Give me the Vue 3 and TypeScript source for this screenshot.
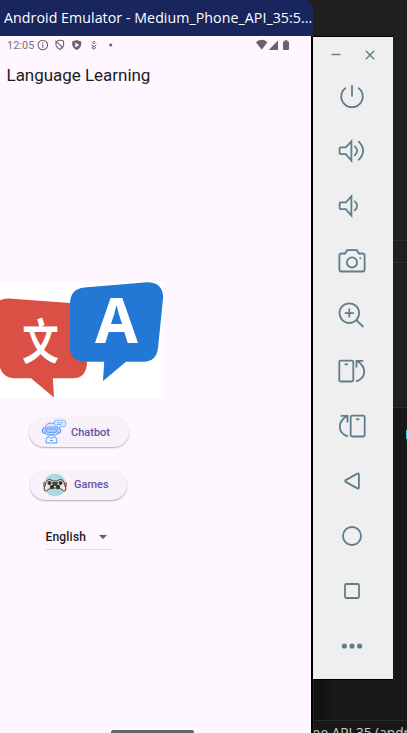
<script setup lang="ts">
interface Tool { name: string; paths: string[]; dots?: number[][]; flip?: boolean }

const speaker = 'M4.7 12.4H9.8L15.4 6.4V25.6L9.8 19.2H4.7Q3.6 19.2 3.6 18.1V13.5Q3.6 12.4 4.7 12.4Z'
const rotate = [
  'M4.8 5.6H15.8Q17.3 5.6 17.3 7.1V25Q17.3 26.5 15.8 26.5H4.8Q3.3 26.5 3.3 25V7.1Q3.3 5.6 4.8 5.6Z',
  'M8.6 9.3H12',
  'M20 26.4C30.5 23 31 12 21 6M27.3 5.8H20.5V12.5',
]
const tools: Tool[] = [
  { name: 'Power', paths: ['M16 5V16.5', 'M9.8 7.8A10.7 10.7 0 1 0 22.2 7.8'] },
  { name: 'Volume up', paths: [speaker, 'M18.3 10.9Q24 15.8 18.3 20.7', 'M22.3 6.2Q32 15.8 22.3 25.4'] },
  { name: 'Volume down', paths: [speaker, 'M18.3 10.9Q24 15.8 18.3 20.7'] },
  { name: 'Screenshot', paths: ['M5.7 8.5H9.2L11 5.2H21L22.8 8.5H26.3Q28.6 8.5 28.6 10.8V24.2Q28.6 26.5 26.3 26.5H5.7Q3.4 26.5 3.4 24.2V10.8Q3.4 8.5 5.7 8.5Z', 'M21.1 17.4A5.1 5.1 0 1 1 10.9 17.4A5.1 5.1 0 1 1 21.1 17.4'], dots: [[24.3, 13.2, 1]] },
  { name: 'Zoom', paths: ['M23.1 13.1A9.8 9.8 0 1 1 3.5 13.1A9.8 9.8 0 1 1 23.1 13.1', 'M20.4 20.2L27.4 27', 'M8.8 13.1H17.8M13.3 8.6V17.6'] },
  { name: 'Rotate left', paths: rotate },
  { name: 'Rotate right', paths: rotate, flip: true },
  { name: 'Back', paths: ['M9.8 15.1L21.4 8.6Q22.9 7.9 22.9 9.5V22.5Q22.9 24.1 21.4 23.4L9.8 16.9Q8.5 16 9.8 15.1Z'] },
  { name: 'Home', paths: ['M25 16A9 9 0 1 1 7 16A9 9 0 1 1 25 16'] },
  { name: 'Overview', paths: ['M10.2 9H21.8Q23 9 23 10.2V21.8Q23 23 21.8 23H10.2Q9 23 9 21.8V10.2Q9 9 10.2 9Z'] },
  { name: 'More', paths: [], dots: [[8.4, 16, 2.6], [16, 16, 2.6], [23.6, 16, 2.6]] },
]
</script>

<template>
  <div class="desktop">
    <section class="emulator">
      <header class="titlebar">Android Emulator - Medium_Phone_API_35:5...</header>
      <main class="phone">
        <div class="status">
          <span class="clock">12:05</span>
          <svg class="notes" width="80" height="14" viewBox="0 0 80 14" fill="none" stroke="#68646b" stroke-width="1.1">
            <circle cx="5.8" cy="7" r="4.8" /><path d="M5.8 6.3V9.7M5.8 4.1V5.2" />
            <path d="M22.7 2.3Q25 2 26.6 3.3V7.4Q25.9 10 22.9 11.6Q19.8 10 19 7.4V3.2L26 10M20 3L22.7 2.3" />
            <path d="M39.7 1.9L44.2 3.5V6.8Q43.7 10.2 39.7 12Q35.7 10.2 35.2 6.8V3.5Z" fill="#68646b" stroke="none" />
            <path d="M38.2 4.6L42.2 7L38.2 9.4Z" fill="#fef7ff" stroke="none" />
            <path d="M56.8 3L58.3 4.5L56.8 6L55.3 4.5ZM54.2 6.5L56.8 9L59.4 6.5M56.8 8L58.8 9.7L56.8 11.2L54.8 9.7Z" stroke-width="1" />
            <circle cx="73.7" cy="7" r="1.6" fill="#68646b" stroke="none" />
          </svg>
          <svg class="signals" width="36" height="14" viewBox="0 0 36 14" fill="#68646b">
            <path d="M0 4.2Q5.7 -.5 11.4 4.2L5.7 11.7Z" /><path d="M12.7 12L22 2.6V12Z" />
            <path d="M27 3.5H28.6V2.2H31.4V3.5H33V11.2Q33 12 32.2 12H27.8Q27 12 27 11.2Z" />
          </svg>
        </div>
        <h1>Language Learning</h1>
        <svg class="logo" width="164" height="116" viewBox="0 0 164 116">
          <path d="M0 0H163.3V116H0Z" fill="#fff" />
          <path d="M0 18.3Q4 16.2 9 16.6L80 21.8L87 82Q85.5 96.3 73 96.3H52.8L54 115.5L31 96.3H13Q3.5 95.5 0 86Z" fill="#da5044" />
          <path d="M70 21Q70.5 6.5 84.5 5.4L147 .3Q162.5 .2 163.2 15L158 66Q156.5 79.5 143.5 79.8H126L103 99L104.2 79.8H84Q70.5 78.5 70 66Z" fill="#2278d4" />
          <text class="han" transform="translate(22.3 76.5) scale(.96 1.25)">文</text>
          <text class="latin" x="95" y="61" textLength="43" lengthAdjust="spacingAndGlyphs">A</text>
        </svg>
        <button class="pill chatbot">
          <svg width="26" height="26" viewBox="0 0 26 26" fill="none" stroke="#5b9bf8" stroke-width="1">
            <path d="M4 9Q5 4 10.5 4Q16 4 17 9" fill="#dfecff" />
            <rect x="4" y="8" width="13" height="8" rx="3.5" fill="#dcebff" />
            <rect x="5.5" y="9.8" width="10" height="3.8" rx="1.7" fill="#a9ccff" />
            <path d="M3.5 8.7Q1.2 10 1.4 12Q1.6 14 3.8 14.6M17.5 8.7Q19.7 10 19.5 12Q19.2 14 17.2 14.6" stroke-width="1.5" />
            <path d="M5.2 24V20.5Q5.5 17.8 8 17.6L10.5 19.5L13 17.6Q15.5 17.8 15.8 20.5V24Z" fill="#eef5ff" />
            <path d="M8 15Q10.5 17 13 15M9 21.5H12" />
            <path d="M15 1.2H22.5Q24.5 1.2 24.5 3V5.8Q24.5 7.6 22.7 7.6H19L16.3 9.5V7.5Q13.3 7 13.3 5V3Q13.3 1.2 15 1.2Z" fill="#e0edff" stroke="#83b4fa" />
            <path d="M16 3.7H22M15.5 5.5H20.5" stroke-width=".7" />
          </svg>
          Chatbot
        </button>
        <button class="pill games">
          <svg width="26" height="26" viewBox="0 0 26 26">
            <path d="M1 2H25V24H1Z" fill="#f8f4ef" /><circle cx="13" cy="13" r="11.3" fill="#a9d9e3" />
            <path d="M2 10V15M24 10V15" stroke="#dc5557" stroke-width="1.6" />
            <path d="M4 10.5Q5 7 8 7.5L11 9H15L18 7.5Q21 7 22 10.5L24 17Q23.5 20 21.5 18.8L17.5 16H8.5L4.5 18.8Q2.5 20 2 17Z" fill="#eae7df" stroke="#484443" stroke-width="1" />
            <path d="M10 10H16L15 14H11Z" fill="#454442" />
            <circle cx="7.5" cy="11" r="2" fill="#353638" /><circle cx="18.5" cy="11" r="2" fill="#353638" />
            <circle cx="10" cy="15" r="2.2" fill="#353638" /><circle cx="16" cy="15" r="2.2" fill="#353638" />
          </svg>
          Games
        </button>
        <div class="language">
          <span>English</span>
          <svg width="8" height="4" viewBox="0 0 8 4"><path d="M0 0H8L4 4Z" fill="#625e65" /></svg>
        </div>
        <div class="handle"></div>
      </main>
    </section>
    <aside class="editor">
      <div class="pane tabs"></div>
      <div class="pane crumbs"></div>
      <div class="pane code"></div>
      <div class="pane terminal"><i></i></div>
      <div class="pane footer"><span>ne API 35 (andr</span></div>
    </aside>
    <nav class="toolbar">
      <div class="controls">
        <svg width="10" height="10" viewBox="0 0 10 10"><path d="M.5 4.5H9.5" /></svg>
        <svg width="10" height="10" viewBox="0 0 10 10"><path d="M.8 .8L9.2 9.2M9.2 .8L.8 9.2" /></svg>
      </div>
      <div v-for="tool in tools" :key="tool.name" class="tool">
        <svg :class="{ flip: tool.flip }" width="32" height="32" viewBox="0 0 32 32">
          <path v-for="d in tool.paths" :key="d" :d="d" />
          <circle v-for="dot in tool.dots" :key="dot[0]" :cx="dot[0]" :cy="dot[1]" :r="dot[2]" />
        </svg>
      </div>
    </nav>
  </div>
</template>

<style>
body { margin: 0; overflow: hidden; }
</style>
<style scoped>
* { box-sizing: border-box; }
.desktop { position: relative; display: flex; width: 407px; height: 733px; overflow: hidden; background: #1f1f1f; font-family: Roboto, sans-serif; }
svg { display: block; flex: none; }
.emulator { display: flex; flex-direction: column; width: 313px; flex: none; background: #1f1f1f; }
.titlebar { height: 36px; padding-left: 4px; border-top-right-radius: 9px; background: #18265d; color: #fff; font: 14.2px/35px "Open Sans", sans-serif; letter-spacing: .06px; white-space: nowrap; }
.phone { display: flex; flex-direction: column; align-items: flex-start; height: 697px; background: #fef7ff; border-right: 2px solid #000; color: #1d1b20; }
.status { display: flex; align-items: center; width: 100%; height: 18px; padding-left: 7px; }
.clock { width: 30px; color: #77737a; font-size: 11px; letter-spacing: 0; }
.signals { margin-left: 139px; }
h1 { margin: 11px 0 0 6.5px; font-size: 17px; line-height: 21px; font-weight: 400; letter-spacing: -.03px; white-space: nowrap; }
.logo { margin-top: 196px; }
.han { font: 700 38px "Noto Sans CJK SC", sans-serif; fill: #fff; }
.latin { font: 700 62px "Noto Sans", sans-serif; fill: #fff; }
.pill { display: flex; align-items: center; height: 30px; padding: 0; border: 0; border-radius: 15px; background: #f7f2fa; box-shadow: 0 1px 1.5px rgba(0,0,0,.3); color: #6750a4; font: 500 11px Roboto, sans-serif; letter-spacing: 0; }
.chatbot { width: 100px; margin: 19px 0 0 28.5px; padding-left: 12px; gap: 4.5px; }
.games { width: 97px; margin: 22.5px 0 0 30px; padding-left: 12px; gap: 6px; }
.language { display: flex; align-items: center; justify-content: space-between; width: 66px; height: 26px; margin: 24.5px 0 0 45.5px; padding-right: 5px; border-bottom: 1px solid #e2dce4; font-size: 12px; font-weight: 500; letter-spacing: .2px; }
.handle { width: 83px; height: 3px; margin: auto 0 0 111px; border-radius: 2px 2px 0 0; background: #68646b; }
.editor { display: flex; flex-direction: column; width: 94px; background: #181818; }
.pane { border-bottom: 1px solid #2b2b2b; background: #1f1f1f; }
.tabs { height: 241px; }
.crumbs { height: 22px; }
.code { height: 145px; }
.terminal { height: 313px; background: linear-gradient(90deg, #101010, #181818 22px); border-left: 1px solid #18265d; }
.terminal i { display: block; width: 1px; height: 9px; margin: 22px 0 0 auto; background: #38bdf8; }
.footer { height: 12px; overflow: hidden; border: 0; border-left: 1px solid #18265d; background: #181818; color: #ccc; }
.footer span { display: block; margin: 3px 0 0 -2px; font: 13.7px/18px "Open Sans", sans-serif; white-space: nowrap; }
.toolbar { position: absolute; left: 313px; top: 36px; width: 80px; height: 644px; border-top: 1px solid #000; border-bottom: 1px solid #000; background: #efefef; }
.controls { display: flex; height: 31px; padding: 13px 0 0 17.5px; gap: 24px; }
.tool { display: flex; align-items: center; justify-content: center; height: 55px; padding-right: 2px; }
.toolbar path { fill: none; stroke: #607d8b; stroke-width: 1.8; stroke-linecap: butt; }
.toolbar circle { fill: #607d8b; }
.toolbar .controls path { stroke-width: 1.4; }
.flip { transform: scaleX(-1); }
</style>
